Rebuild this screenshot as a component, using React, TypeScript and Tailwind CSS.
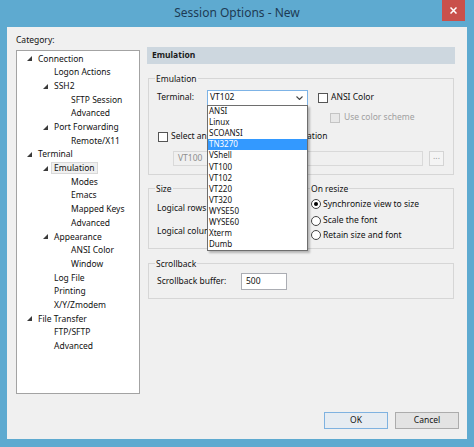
import React from 'react'

type TreeNode = { label: string; level: number; open?: boolean; selected?: boolean }

const tree: TreeNode[] = [
  { label: 'Connection', level: 0, open: true },
  { label: 'Logon Actions', level: 1 },
  { label: 'SSH2', level: 1, open: true },
  { label: 'SFTP Session', level: 2 },
  { label: 'Advanced', level: 2 },
  { label: 'Port Forwarding', level: 1, open: true },
  { label: 'Remote/X11', level: 2 },
  { label: 'Terminal', level: 0, open: true },
  { label: 'Emulation', level: 1, open: true, selected: true },
  { label: 'Modes', level: 2 },
  { label: 'Emacs', level: 2 },
  { label: 'Mapped Keys', level: 2 },
  { label: 'Advanced', level: 2 },
  { label: 'Appearance', level: 1, open: true },
  { label: 'ANSI Color', level: 2 },
  { label: 'Window', level: 2 },
  { label: 'Log File', level: 1 },
  { label: 'Printing', level: 1 },
  { label: 'X/Y/Zmodem', level: 1 },
  { label: 'File Transfer', level: 0, open: true },
  { label: 'FTP/SFTP', level: 1 },
  { label: 'Advanced', level: 1 },
]

const indent = ['pl-[5px]', 'pl-[21px]', 'pl-[38px]']

const terminals = ['ANSI', 'Linux', 'SCOANSI', 'TN3270', 'VShell', 'VT100', 'VT102', 'VT220', 'VT320', 'WYSE50', 'WYSE60', 'Xterm', 'Dumb']

function Arrow() {
  return (
    <svg width="5" height="5" viewBox="0 0 5 5">
      <path d="M5 0V5H0Z" fill="#3a3a3a" />
    </svg>
  )
}

function Checkbox({ disabled }: { disabled?: boolean }) {
  return (
    <span
      className={`w-[10px] h-[10px] shrink-0 border ${disabled ? 'border-[#c4c4c4] bg-[#e8e8e8]' : 'border-[#555] bg-white'}`}
    />
  )
}

function Radio({ checked }: { checked?: boolean }) {
  return (
    <span className="w-[10px] h-[10px] shrink-0 rounded-full border border-[#444] bg-white flex items-center justify-center">
      {checked && <span className="w-[4px] h-[4px] rounded-full bg-black" />}
    </span>
  )
}

export default function App() {
  return (
    <div className="w-[474px] h-[447px] bg-[#5eaad0] flex flex-col font-['Noto_Sans',sans-serif] text-[8.5px] leading-none text-[#111] overflow-hidden">
      {/* Title bar */}
      <div className="h-[27px] flex items-start shrink-0">
        <div className="w-[32px]" />
        <div className="flex-1 text-center text-[12px] leading-[26px] text-[#1d3b54]">Session Options - New</div>
        <button className="w-[23px] h-[21px] mr-[9px] bg-[#c9504b] flex items-center justify-center">
          <svg width="7" height="7" viewBox="0 0 7 7">
            <path d="M0.5 0.5L6.5 6.5M6.5 0.5L0.5 6.5" stroke="white" strokeWidth="1.5" />
          </svg>
        </button>
      </div>

      {/* Client area */}
      <div className="mx-[7px] h-[412px] bg-[#f0f0f0] flex flex-col">
        <div className="flex">
          {/* Category tree */}
          <div className="w-[140px] pl-[9px] pt-[5px] shrink-0">
            <div className="h-[16px] flex items-center">Category:</div>
            <div className="mt-[2px] w-[124px] h-[344px] border border-[#a3a3a3] bg-white pt-[1px]">
              {tree.map((n, i) => (
                <div key={i} className={`flex items-center h-[13.7px] ${indent[n.level]}`}>
                  <span className="w-[16px] flex items-center pl-[5px]">{n.open && <Arrow />}</span>
                  {n.selected ? (
                    <span className="-ml-[3px] px-[2px] h-[12px] flex items-center border border-[#d9d9d9] bg-[#f0f0f0]">{n.label}</span>
                  ) : (
                    <span>{n.label}</span>
                  )}
                </div>
              ))}
            </div>
          </div>

          {/* Options panel */}
          <div className="w-[308px] pt-[20px]">
            <div className="h-[17px] bg-[#cdd7df] flex items-center pl-[5px] font-bold text-[#1a1a1a]">Emulation</div>

            <fieldset className="mx-[1px] mt-[8px] border border-[#d6d6d6] pb-[8px]">
              <legend className="ml-[6px] px-[1px] leading-[13px]">Emulation</legend>
              <div className="flex mt-[4.5px]">
                <div className="flex items-center h-[16px] pl-[8px]">
                  <span className="w-[50px]">Terminal:</span>
                  <div className="relative w-[101px] h-[16px] border border-[#7db3e6] bg-white flex items-center justify-between pl-[2px] pr-[4px]">
                    <span>VT102</span>
                    <svg width="7" height="4" viewBox="0 0 7 4">
                      <path d="M0.5 0.5L3.5 3.5L6.5 0.5" stroke="#444" strokeWidth="1.1" fill="none" />
                    </svg>
                    <div className="absolute left-[-1px] top-full w-[101px] border border-[#6e6e6e] bg-white z-10 shadow-[2px_2px_2px_rgba(0,0,0,0.25)] text-[8px]">
                      {terminals.map((t) => (
                        <div
                          key={t}
                          className={`h-[11.1px] flex items-center pl-[1px] ${t === 'TN3270' ? 'bg-[#3399ff] text-white' : ''}`}
                        >
                          {t}
                        </div>
                      ))}
                    </div>
                  </div>
                </div>
                <div className="ml-[10px] flex flex-col">
                  <div className="h-[16px] flex items-center gap-[3px]">
                    <Checkbox />
                    <span>ANSI Color</span>
                  </div>
                  <div className="mt-[6px] ml-[12px] h-[12px] flex items-center gap-[4px] text-[#a0a0a0]">
                    <Checkbox disabled />
                    <span>Use color scheme</span>
                  </div>
                </div>
              </div>
              <div className="mt-[7px] h-[12px] pl-[9px] flex items-center gap-[3px]">
                <Checkbox />
                <span>Select an alternate keyboard emulation</span>
              </div>
              <div className="mt-[8px] pl-[24px] flex items-center">
                <div className="w-[250px] h-[15px] border border-[#d9d9d9] bg-[#f0f0f0] flex items-center pl-[4px] text-[#8e8e8e]">VT100</div>
                <div className="ml-[6px] w-[15px] h-[15px] border border-[#d4d4d4] bg-[#f4f4f4] flex items-center justify-center text-[#9a9a9a] pb-[3px]">...</div>
              </div>
            </fieldset>

            <div className="mx-[1px] mt-[7.5px] flex gap-[5px]">
              <fieldset className="w-[149px] h-[67px] border border-[#d6d6d6]">
                <legend className="ml-[6px] px-[1px] leading-[13px]">Size</legend>
                <div className="mt-[6.5px] h-[14px] pl-[8px] flex items-center">Logical rows</div>
                <div className="mt-[9px] h-[14px] pl-[8px] flex items-center">Logical columns</div>
              </fieldset>
              <fieldset className="flex-1 h-[67px] border border-[#d6d6d6]">
                <legend className="ml-[7px] px-[1px] leading-[13px]">On resize</legend>
                <div className="mt-[2.5px] h-[13px] pl-[8px] flex items-center gap-[2px]">
                  <Radio checked />
                  <span>Synchronize view to size</span>
                </div>
                <div className="mt-[3.5px] h-[13px] pl-[8px] flex items-center gap-[2px]">
                  <Radio />
                  <span>Scale the font</span>
                </div>
                <div className="mt-[1.5px] h-[13px] pl-[8px] flex items-center gap-[2px]">
                  <Radio />
                  <span>Retain size and font</span>
                </div>
              </fieldset>
            </div>

            <fieldset className="mx-[1px] mt-[8px] border border-[#d6d6d6] pb-[8px]">
              <legend className="ml-[6px] px-[1px] leading-[13px]">Scrollback</legend>
              <div className="mt-[2.5px] pl-[8px] flex items-center">
                <span className="w-[84px]">Scrollback buffer:</span>
                <div className="w-[46px] h-[17px] border border-[#abadb3] bg-white flex items-center pl-[4px]">500</div>
              </div>
            </fieldset>
          </div>
        </div>

        {/* Buttons */}
        <div className="mt-auto pb-[10px] pr-[8px] flex justify-end gap-[7px]">
          <button className="w-[64px] h-[17px] border border-[#7fb2e0] bg-[#e6ecf2] flex items-center justify-center">OK</button>
          <button className="w-[64px] h-[17px] border border-[#acacac] bg-[#e3e3e3] flex items-center justify-center">Cancel</button>
        </div>
      </div>
    </div>
  )
}
